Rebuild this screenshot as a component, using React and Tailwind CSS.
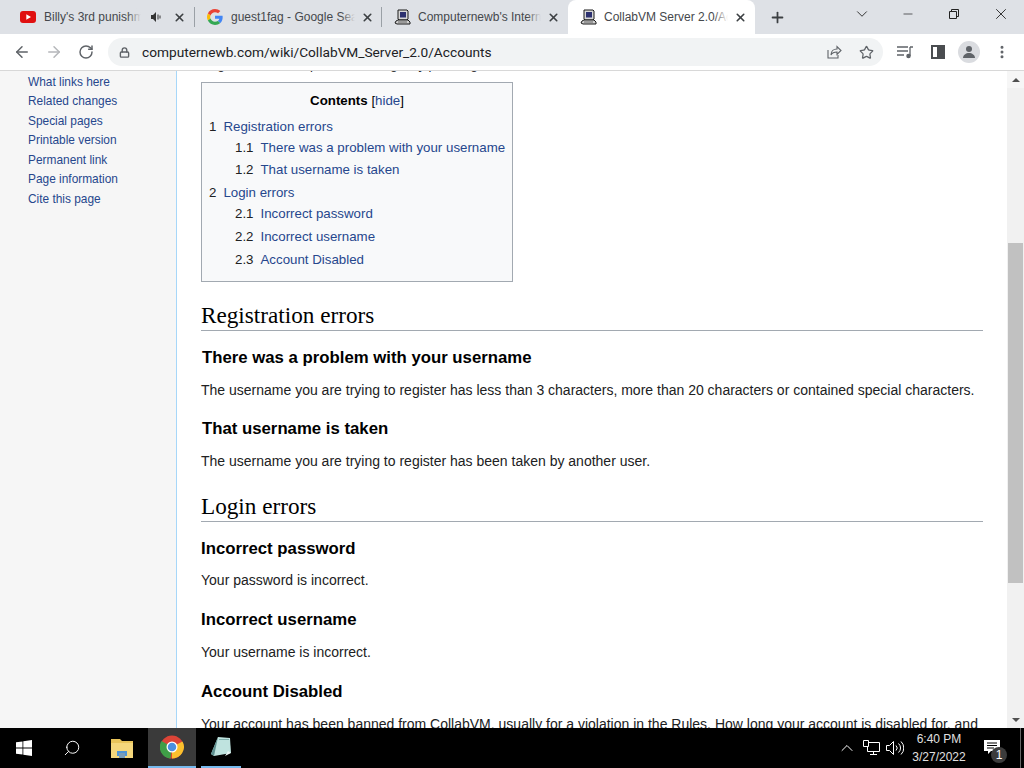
import { ArrowLeft, ArrowRight, RotateCw, Lock, Star, Plus, X, ChevronDown, Minus, ChevronUp, Search, MoreVertical } from "lucide-react";

const SIDE_LINKS = [
  "What links here",
  "Related changes",
  "Special pages",
  "Printable version",
  "Permanent link",
  "Page information",
  "Cite this page",
];

function PcIcon() {
  return (
    <svg width="17" height="17" viewBox="0 0 17 17" className="shrink-0">
      <path d="M4 1h9l1 1v8l-1 1H5L4 10z" fill="#d8d8d8" stroke="#1a1a1a" />
      <rect x="6" y="3" width="6" height="5.500" fill="#2d3170" />
      <path d="M2 12l2-1h10l2 2v2H3l-2-1z" fill="#d0d0d0" stroke="#1a1a1a" />
      <path d="M4 13h9" stroke="#666" strokeWidth="1" />
    </svg>
  );
}

function YoutubeIcon() {
  return (
    <svg width="16" height="12" viewBox="0 0 16 12" className="shrink-0">
      <rect width="16" height="12" rx="3" fill="#e01010" />
      <path d="M6.3 3.3v5.4L11 6z" fill="#fff" />
    </svg>
  );
}

function GoogleIcon() {
  return (
    <svg width="16" height="16" viewBox="0 0 48 48" className="shrink-0">
      <path fill="#EA4335" d="M24 9.5c3.5 0 6.700 1.200 9.200 3.600l6.900-6.900C35.900 2.400 30.500 0 24 0 14.600 0 6.500 5.400 2.600 13.200l8 6.200C12.500 13.700 17.800 9.500 24 9.500z" />
      <path fill="#4285F4" d="M47 24.500c0-1.600-.1-3.100-.4-4.500H24v9h13c-.6 3-2.200 5.500-4.800 7.200l7.700 6c4.500-4.200 7.100-10.300 7.100-17.700z" />
      <path fill="#FBBC05" d="M10.500 28.600c-.5-1.400-.8-3-.8-4.600s.3-3.200.8-4.600l-8-6.200C.9 16.500 0 20.100 0 24s.9 7.500 2.600 10.800z" />
      <path fill="#34A853" d="M24 48c6.500 0 11.900-2.100 15.900-5.800l-7.700-6c-2.200 1.400-4.900 2.300-8.200 2.300-6.200 0-11.500-4.200-13.400-9.900l-8 6.200C6.500 42.600 14.600 48 24 48z" />
    </svg>
  );
}

function Tab({ icon, title, width, speaker, active }) {
  return (
    <div
      className={`flex items-center shrink-0 h-[34px] pl-[12px] pr-[8px] ${width} ${
        active ? "bg-white rounded-t-[8px]" : ""
      }`}
    >
      <div className="w-[16px] flex justify-center shrink-0">{icon}</div>
      <div className="flex-1 min-w-0 ml-[8px] text-[12px] text-[#45484c] whitespace-nowrap overflow-hidden relative">
        {title}
        <div className={`absolute right-0 top-0 bottom-0 w-[14px] bg-gradient-to-r from-transparent ${active ? "to-white" : "to-[#dee1e6]"}`} />
      </div>
      {speaker && (
        <svg width="12" height="12" viewBox="0 0 12 12" className="shrink-0 ml-[9px] mr-[5px]">
          <path d="M1 4h2l3-3v10L3 8H1z" fill="#333" />
          <path d="M8 3.500v5M10 4.500v3" stroke="#333" strokeWidth="1" />
        </svg>
      )}
      <X size={13} strokeWidth={3} className="text-[#3c4043] shrink-0 ml-[6px]" />
    </div>
  );
}

function TabBar() {
  return (
    <div className="h-[34px] bg-[#dee1e6] flex items-end shrink-0 pl-[8px]">
      <Tab icon={<YoutubeIcon />} title="Billy's 3rd punishm" width="w-[186px]" speaker />
      <div className="w-px h-[20px] bg-[#9aa0a6] mb-[7px]" />
      <Tab icon={<GoogleIcon />} title="guest1fag - Google Sea" width="w-[187px]" />
      <div className="w-px h-[20px] bg-[#9aa0a6] mb-[7px] -ml-px" />
      <Tab icon={<PcIcon />} title="Computernewb's Intern" width="w-[186px]" />
      <Tab icon={<PcIcon />} title="CollabVM Server 2.0/Acc" width="w-[187px]" active />
      <Plus size={17} strokeWidth={2.5} className="text-[#3c4043] mb-[8px] ml-[14px]" />
      <div className="flex-1" />
      <div className="flex items-center h-[28px] self-start text-[#222]">
        <ChevronDown size={18} strokeWidth={1.2} className="mr-[30px]" />
        <Minus size={14} strokeWidth={1.2} className="mr-[33px]" />
        <svg width="12" height="12" viewBox="0 0 12 12" className="mr-[32px]">
          <path d="M1.500 3.500h7v7h-7zM3.500 3.500v-2h7v7h-2" fill="none" stroke="#222" />
        </svg>
        <X size={18} strokeWidth={1.2} className="mr-[14px]" />
      </div>
    </div>
  );
}

function Toolbar() {
  return (
    <div className="h-[37px] bg-white border-b border-[#d8d8d8] flex items-center shrink-0">
      <ArrowLeft size={18} strokeWidth={2} className="text-[#5f6368] ml-[13px]" />
      <ArrowRight size={18} strokeWidth={2} className="text-[#b5b7ba] ml-[14px]" />
      <RotateCw size={16} strokeWidth={2.2} className="text-[#5f6368] ml-[15px]" />
      <div className="ml-[14px] w-[775px] h-[28px] bg-[#f1f3f4] rounded-full flex items-center pl-[11px]">
        <Lock size={11} strokeWidth={3} className="text-[#5f6368]" />
        <span className="ml-[12px] text-[13.700px] text-[#202124] font-['Roboto',sans-serif] whitespace-nowrap">
          computernewb.com/wiki/CollabVM_Server_2.0/Accounts
        </span>
        <div className="flex-1" />
        <svg width="16" height="16" viewBox="0 0 16 16" className="mr-[17px]" fill="none" stroke="#5f6368" strokeWidth="1.1">
          <path d="M2 6v8h10v-3" />
          <path d="M5 11c0-4 3-6 6-6V2.500l4 4-4 4V8c-3 0-5 1-6 3z" />
        </svg>
        <Star size={15} strokeWidth={2} className="text-[#5f6368] mr-[9px]" />
      </div>
      <svg width="18" height="14" viewBox="0 0 18 14" className="ml-[13px]" stroke="#5f6368" fill="none" strokeWidth="1.300">
        <path d="M1 2h11M1 6h11M1 10h7" />
        <path d="M14 2h3M14 2v9" />
        <circle cx="12.500" cy="11" r="1.600" fill="#5f6368" />
      </svg>
      <div className="ml-[17px] w-[14px] h-[14px] border-2 border-[#4a4d50] flex justify-end">
        <div className="w-[6px] h-full bg-[#4a4d50]" />
      </div>
      <div className="ml-[13px] w-[22px] h-[22px] rounded-full bg-[#dadce0] flex items-center justify-center">
        <svg width="14" height="14" viewBox="0 0 14 14" fill="#5f6368">
          <circle cx="7" cy="4" r="3" />
          <path d="M1 13c0-3 3-5 6-5s6 2 6 5z" />
        </svg>
      </div>
      <MoreVertical size={16} strokeWidth={2.5} className="text-[#5f6368] ml-[14px]" />
    </div>
  );
}

function Sidebar() {
  return (
    <div className="w-[177px] shrink-0 bg-[#f6f6f6] border-r border-[#a7d7f9] pl-[28px] pt-[1.500px]">
      {SIDE_LINKS.map((link) => (
        <div key={link} className="text-[11.9px] leading-[19.6px] text-[#26478d] whitespace-nowrap">
          {link}
        </div>
      ))}
    </div>
  );
}

function TocRow({ num, text, sub, className }) {
  return (
    <div className={`flex whitespace-nowrap h-[22px] items-center ${sub ? "pl-[26px]" : ""} ${className}`}>
      <span className="text-[#202122] mr-[7px]">{num}</span>
      <span className="text-[#26478d]">{text}</span>
    </div>
  );
}

function Toc() {
  return (
    <div className="w-[312px] h-[200px] bg-[#f8f9fa] border border-[#a2a9b1] text-[13.300px] pl-[7px] pt-[8px]">
      <div className="text-center leading-[20px] mb-[5px] pr-[7px]">
        <span className="font-bold text-black">Contents</span>{" "}
        <span className="text-black">[</span>
        <span className="text-[#26478d]">hide</span>
        <span className="text-black">]</span>
      </div>
      <TocRow num="1" text="Registration errors" />
      <TocRow num="1.1" text="There was a problem with your username" sub className="-mt-px" />
      <TocRow num="1.2" text="That username is taken" sub />
      <TocRow num="2" text="Login errors" className="mt-px" />
      <TocRow num="2.1" text="Incorrect password" sub className="-mt-px" />
      <TocRow num="2.2" text="Incorrect username" sub className="mt-px" />
      <TocRow num="2.3" text="Account Disabled" sub className="mt-px" />
    </div>
  );
}

function H2({ children, className }) {
  return (
    <h2 className={`font-['Liberation_Serif',serif] text-[23.200px] leading-[29px] text-black border-b border-[#a2a9b1] ${className}`}>
      {children}
    </h2>
  );
}

function H3({ children, className }) {
  return <h3 className={`font-bold text-[16.750px] leading-[22px] text-black ${className}`}>{children}</h3>;
}

function P({ children, className }) {
  return <p className={`text-[14px] leading-[20px] text-[#202122] whitespace-nowrap ${className}`}>{children}</p>;
}

function Article() {
  return (
    <div className="flex-1 min-w-0 bg-white pl-[24px] pr-[24px] overflow-hidden">
      <p className="text-[13px] leading-[20px] text-[#202122] -mt-[16px] whitespace-nowrap mb-[7px]">
        Regular users can perform the login by pressing
      </p>
      <Toc />
      <H2 className="mt-[19px]">Registration errors</H2>
      <H3 className="mt-[16px]"><span className="ml-px">There was a problem with your username</span></H3>
      <P className="mt-[11px]">The username you are trying to register has less than 3 characters, more than 20 characters or contained special characters.</P>
      <H3 className="mt-[18px]"><span className="ml-px">That username is taken</span></H3>
      <P className="mt-[11px]">The username you are trying to register has been taken by another user.</P>
      <H2 className="mt-[21px]">Login errors</H2>
      <H3 className="mt-[16px]">Incorrect password</H3>
      <P className="mt-[10px]">Your password is incorrect.</P>
      <H3 className="mt-[19px]">Incorrect username</H3>
      <P className="mt-[11px]">Your username is incorrect.</P>
      <H3 className="mt-[19px]">Account Disabled</H3>
      <P className="mt-[11px]">Your account has been banned from CollabVM, usually for a violation in the Rules. How long your account is disabled for, and</P>
    </div>
  );
}

function Scrollbar() {
  return (
    <div className="w-[17px] shrink-0 bg-[#f1f1f1] flex flex-col items-center">
      <div className="h-[17px] w-full bg-[#f6f6f6] flex items-center justify-center">
        <div className="w-0 h-0 border-x-[4px] border-x-transparent border-b-[4px] border-b-[#505050]" />
      </div>
      <div className="h-[155px]" />
      <div className="w-[15px] h-[340px] bg-[#c1c1c1]" />
      <div className="flex-1" />
      <div className="h-[17px] flex items-center justify-center">
        <div className="w-0 h-0 border-x-[4px] border-x-transparent border-t-[4px] border-t-[#505050]" />
      </div>
    </div>
  );
}

function Taskbar() {
  return (
    <div className="h-[40px] bg-black flex items-stretch shrink-0 text-white">
      <div className="w-[48px] flex items-center justify-center">
        <svg width="16" height="16" viewBox="0 0 16 16" fill="#fff">
          <path d="M0 2.300l6.500-.9v6.200H0zM7.300 1.300L16 0v7.600H7.300zM0 8.400h6.500v6.200L0 13.700zM7.300 8.400H16V16l-8.700-1.300z" />
        </svg>
      </div>
      <div className="w-[48px] flex items-center justify-center">
        <Search size={18} strokeWidth={1.3} className="-scale-x-100" />
      </div>
      <div className="w-[52px] flex items-center justify-center">
        <svg width="22" height="20" viewBox="0 0 22 20">
          <path d="M0 1h9l2 2h11v17H0z" fill="#e9c45a" />
          <path d="M0 5h22v15H0z" fill="#f5d77c" />
          <path d="M6 18v-5h10v5h-2v-3H8v3z" fill="#4f94d4" />
          <path d="M8 15h6v5H8z" fill="#7a9cb8" />
        </svg>
      </div>
      <div className="w-[48px] bg-[#3a3a3a] border-b-[2px] border-[#76b9ed] flex items-center justify-center">
        <svg width="24" height="24" viewBox="0 0 48 48">
          <circle cx="24" cy="24" r="23" fill="#db4437" />
          <path d="M24 24L45 13A23 23 0 0 1 24 47z" fill="#fbc02d" />
          <path d="M24 24l-3 23A23 23 0 0 1 3 12z" fill="#3f9e47" />
          <circle cx="24" cy="24" r="11" fill="#fff" />
          <circle cx="24" cy="24" r="8.500" fill="#4a8fe0" />
        </svg>
      </div>
      <div className="w-[5px]" />
      <div className="w-[40px] border-b-[2px] border-[#76b9ed] flex items-center justify-center">
        <svg width="22" height="24" viewBox="0 0 22 24">
          <path d="M8 2l12 1 1 15-17 3-3-2z" fill="#bfe3df" />
          <path d="M8 2L1 19l3 2z" fill="#5d8f8f" />
          <path d="M9 4h10v1H9z" fill="#7fb0ad" />
          <path d="M15 21l6-3-3-2z" fill="#eaf6f5" />
        </svg>
      </div>
      <div className="flex-1" />
      <div className="flex items-center">
        <ChevronUp size={20} strokeWidth={1.200} className="mr-[6px]" />
        <svg width="17" height="16" viewBox="0 0 17 16" fill="none" stroke="#fff" strokeWidth="1" className="mr-[6px]">
          <path d="M4.500 2.500h12v9h-12z" />
          <path d="M.5.5h5v6h-5zM10.500 11.500v3M7 14.500h7" fill="#000" />
        </svg>
        <svg width="18" height="16" viewBox="0 0 18 16" fill="none" stroke="#fff" strokeWidth="1">
          <path d="M.5 5.500h3l4-4v13l-4-4h-3z" />
          <path d="M10 5.500a3.500 3.500 0 0 1 0 5M12.500 3.500a6 6 0 0 1 0 9M15 1.500a9 9 0 0 1 0 13" />
        </svg>
      </div>
      <div className="w-[70px] flex flex-col items-center justify-center text-[12px] leading-[18px] text-[#e0e0e0]">
        <div>6:40 PM</div>
        <div>3/27/2022</div>
      </div>
      <div className="w-[46px] flex items-center pl-[10px] relative">
        <svg width="16" height="14" viewBox="0 0 16 14" fill="#fff" className="-mt-[2px]">
          <path d="M0 0h16v11H7l-3 3v-3H0z" />
          <path d="M3 3h10M3 5.500h10M3 8h7" stroke="#000" strokeWidth="1" />
        </svg>
        <div className="absolute left-[17px] top-[19px] w-[16px] h-[16px] rounded-full bg-[#3c3c3c] text-[12px] leading-[16px] text-center">1</div>
      </div>
      <div className="w-[4px] border-l border-[#666]" />
    </div>
  );
}

export default function App() {
  return (
    <div className="w-[1024px] h-[768px] flex flex-col overflow-hidden bg-white font-['Liberation_Sans',sans-serif]">
      <TabBar />
      <Toolbar />
      <div className="flex-1 min-h-0 flex overflow-hidden">
        <Sidebar />
        <Article />
        <Scrollbar />
      </div>
      <Taskbar />
    </div>
  );
}
